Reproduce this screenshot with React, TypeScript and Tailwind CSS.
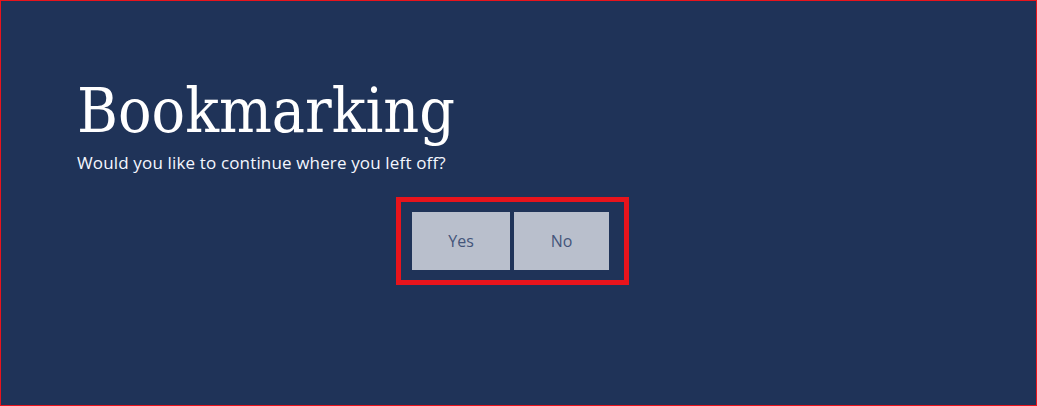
export default function App() {
  return (
    <div className="h-[406px] w-[1037px] overflow-hidden border border-[#e8141c] bg-[#1f3358]">
      <div className="pl-[76px] pt-[73px]">
        <h1 className="font-['DejaVu_Serif_Condensed','DejaVu_Serif',serif] text-[62px] leading-[74px] text-white">
          Bookmarking
        </h1>
        <p className="mt-[4px] font-['Open_Sans',sans-serif] text-[17px] leading-[22px] tracking-[0.15px] text-[#f4f7ff]">
          Would you like to continue where you left off?
        </p>
      </div>
      <div className="ml-[395px] mt-[23px] flex w-fit gap-[4px] border-[5px] border-[#e8141c] py-[10px] pl-[11px] pr-[15px]">
        <button className="h-[58px] w-[98px] bg-[#b9bfcc] font-['Open_Sans',sans-serif] text-[16px] text-[#44557a]">
          Yes
        </button>
        <button className="h-[58px] w-[95px] bg-[#b9bfcc] font-['Open_Sans',sans-serif] text-[16px] text-[#44557a]">
          No
        </button>
      </div>
    </div>
  );
}
